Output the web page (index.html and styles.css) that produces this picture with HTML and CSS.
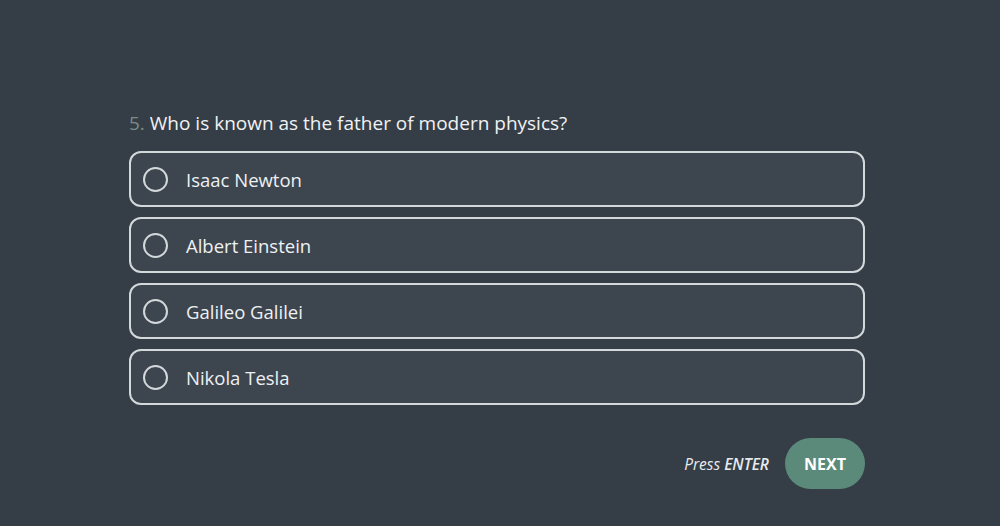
FILE: index.html
```html
<!DOCTYPE html>
<html lang="en">
<head>
<meta charset="utf-8">
<title>Quiz</title>
<link rel="stylesheet" href="styles.css">
</head>
<body>
<main class="quiz">
  <h2 class="question"><span class="num">5.</span> Who is known as the father of modern physics?</h2>
  <div class="options">
    <label class="option"><span class="radio"></span><span class="label">Isaac Newton</span></label>
    <label class="option"><span class="radio"></span><span class="label">Albert Einstein</span></label>
    <label class="option"><span class="radio"></span><span class="label">Galileo Galilei</span></label>
    <label class="option"><span class="radio"></span><span class="label">Nikola Tesla</span></label>
  </div>
  <div class="actions">
    <span class="hint">Press <span class="key">ENTER</span></span>
    <button class="next">NEXT</button>
  </div>
</main>
</body>
</html>
```
FILE: styles.css
```css
html, body {
  margin: 0;
  padding: 0;
  background: #353d46;
  height: 100%;
}
body {
  font-family: "Open Sans", "Noto Sans", sans-serif;
  color: #eef1f3;
}
.quiz {
  width: 736px;
  margin-left: 129px;
  padding-top: 109px;
}
.question {
  margin: 0 0 14px 0;
  font-size: 19px;
  font-weight: 400;
  line-height: 28px;
  color: #f0f2f4;
}
.num {
  color: #7a8c88;
}
.options {
  display: flex;
  flex-direction: column;
  gap: 10px;
}
.option {
  display: flex;
  align-items: center;
  height: 52px;
  border: 2px solid #d3d8db;
  border-radius: 12px;
  background: #3d454f;
  padding: 0 12px;
  box-sizing: content-box;
}
.radio {
  width: 21px;
  height: 21px;
  border: 2px solid #d3d8db;
  border-radius: 50%;
  flex: none;
}
.label {
  margin-left: 18px;
  font-size: 18.5px;
  color: #eef1f3;
}
.actions {
  display: flex;
  justify-content: flex-end;
  align-items: center;
  gap: 16px;
  margin-top: 33px;
}
.hint {
  font-style: italic;
  font-size: 15.5px;
  color: #e8ebee;
}
.key {
  font-weight: 600;
}
.next {
  width: 80px;
  height: 51px;
  border: none;
  border-radius: 26px;
  background: #5b8a7b;
  color: #ffffff;
  font-family: "Open Sans", "Noto Sans", sans-serif;
  font-weight: 700;
  font-size: 16px;
  cursor: pointer;
}
```
